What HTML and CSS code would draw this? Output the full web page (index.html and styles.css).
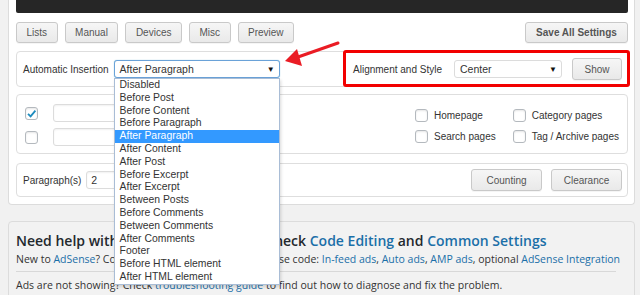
FILE: index.html
```html
<!DOCTYPE html>
<html lang="en">
<head>
    <meta charset="UTF-8">
    <meta name="viewport" content="width=device-width, initial-scale=1.0">
    <title>Ad Inserter Settings</title>
    <link rel="stylesheet" href="styles.css">
</head>
<body>
    <div class="page">
        <div class="panel settings">
            <div class="console"></div>

            <div class="toolbar">
                <div class="tabs">
                    <button class="btn">Lists</button>
                    <button class="btn">Manual</button>
                    <button class="btn">Devices</button>
                    <button class="btn">Misc</button>
                    <button class="btn">Preview</button>
                </div>
                <button class="btn btn-save">Save All Settings</button>
            </div>

            <div class="box box-insert">
                <label class="label">Automatic Insertion</label>
                <div class="select select-insert is-open">
                    <span>After Paragraph</span>
                    <span class="arrow">&#9660;</span>
                    <ul class="dropdown">
                        <li>Disabled</li>
                        <li>Before Post</li>
                        <li>Before Content</li>
                        <li>Before Paragraph</li>
                        <li class="selected">After Paragraph</li>
                        <li>After Content</li>
                        <li>After Post</li>
                        <li>Before Excerpt</li>
                        <li>After Excerpt</li>
                        <li>Between Posts</li>
                        <li>Before Comments</li>
                        <li>Between Comments</li>
                        <li>After Comments</li>
                        <li>Footer</li>
                        <li>Before HTML element</li>
                        <li>After HTML element</li>
                    </ul>
                </div>

                <div class="align-group">
                    <label class="label">Alignment and Style</label>
                    <div class="select select-align">
                        <span>Center</span>
                        <span class="arrow">&#9660;</span>
                    </div>
                    <button class="btn btn-show">Show</button>
                </div>
            </div>

            <div class="box box-pages">
                <div class="rows">
                    <div class="row">
                        <span class="check checked">
                            <svg viewBox="0 0 13 13" width="13" height="13"><path d="M3 6.8 L5.6 9.4 L10.4 3.6" fill="none" stroke="#1e8cbe" stroke-width="1.8"/></svg>
                        </span>
                        <input class="text-input" type="text">
                    </div>
                    <div class="row">
                        <span class="check"></span>
                        <input class="text-input" type="text">
                    </div>
                </div>
                <div class="page-types">
                    <label class="option"><span class="check"></span>Homepage</label>
                    <label class="option"><span class="check"></span>Category pages</label>
                    <label class="option"><span class="check"></span>Search pages</label>
                    <label class="option"><span class="check"></span>Tag / Archive pages</label>
                </div>
            </div>

            <div class="box box-para">
                <label class="label">Paragraph(s)</label>
                <input class="text-input para-input" type="text" value="2">
                <div class="para-actions">
                    <button class="btn btn-wide">Counting</button>
                    <button class="btn btn-wide">Clearance</button>
                </div>
            </div>
        </div>

        <div class="panel help">
            <h2>Need help with your settings? Please check <a href="#">Code Editing</a> and <a href="#">Common Settings</a></h2>
            <p>New to <a href="#">AdSense</a>? Connect the account and use AdSense code: <a href="#">In-feed ads</a>, <a href="#">Auto ads</a>, <a href="#">AMP ads</a>, optional <a href="#">AdSense Integration</a></p>
            <hr>
            <p>Ads are not showing? Check <a href="#">troubleshooting guide</a> to find out how to diagnose and fix the problem.</p>
        </div>

        <svg class="pointer" width="64" height="34" viewBox="0 0 64 34">
            <line x1="18" y1="21" x2="58" y2="7" stroke="#ea1c24" stroke-width="3" stroke-linecap="round"/>
            <polygon points="5,25 17,13 22,30" fill="#ea1c24"/>
        </svg>
    </div>
</body>
</html>
```

FILE: styles.css
```css
body {
    margin: 0;
    background-color: #f1f1f1;
    font-family: "Liberation Sans", Arial, sans-serif;
    font-size: 10px;
    color: #333;
}

.page {
    position: relative;
    padding: 0 5px 0 8px;
}

.panel {
    border: 1px solid #dcdcdc;
    border-radius: 4px;
}

/* top panel is cut off by the window */
.settings {
    background-color: #fff;
    border-top: none;
    border-radius: 0 0 4px 4px;
    padding: 0 6px 7px 7px;
}

.console {
    height: 13px;
    background-color: #262626;
    border-radius: 0 0 2px 2px;
}

.toolbar {
    display: flex;
    justify-content: space-between;
    margin-top: 9px;
}

.tabs {
    display: flex;
    gap: 7px;
}

.btn {
    height: 21px;
    padding: 0 9.5px;
    border: 1px solid #c9c9c9;
    border-radius: 3px;
    background: linear-gradient(#f6f6f6, #e9e9e9);
    font-family: inherit;
    font-size: 10px;
    color: #555;
    box-shadow: 0 1px 0 rgba(0,0,0,0.04);
}

.btn-save {
    width: 103px;
    font-weight: bold;
    color: #555;
}

.btn-show {
    width: 50px;
    height: 22px;
    padding: 0;
}

.btn-wide {
    width: 71px;
    height: 22px;
    padding: 0;
}

.box {
    border: 1px solid #dedede;
    border-radius: 4px;
    margin-top: 8px;
    display: flex;
    align-items: center;
}

.label {
    white-space: nowrap;
}

/* Automatic insertion row */
.box-insert {
    position: relative;
    height: 34px;
    padding: 0 5px 0 6px;
    gap: 5px;
}

.box-insert::after {
    content: "";
    position: absolute;
    left: 326px;
    right: -3px;
    top: -2px;
    bottom: -1px;
    border: 3px solid #f20000;
    border-radius: 3px;
    pointer-events: none;
}

.select {
    position: relative;
    height: 18px;
    box-sizing: border-box;
    border: 1px solid #dcdcdc;
    border-radius: 3px;
    background-color: #fff;
    display: flex;
    align-items: center;
    justify-content: space-between;
    padding: 0 4px 0 5px;
    font-size: 10.5px;
    color: #333;
}

.select .arrow {
    font-size: 8px;
    color: #111;
}

.select-insert {
    width: 166px;
}

.select.is-open {
    border-color: #6aa2d8;
    box-shadow: 0 0 1px rgba(30,140,190,0.6);
}

.select-align {
    width: 108px;
}

.align-group {
    margin-left: auto;
    display: flex;
    align-items: center;
}

.align-group .select {
    margin-left: 12px;
    margin-right: 10px;
}

.dropdown {
    position: absolute;
    top: calc(100% + 1px);
    left: -1px;
    width: 166px;
    box-sizing: border-box;
    margin: 0;
    padding: 0;
    list-style: none;
    background-color: #fff;
    border: 1px solid #a9bdd6;
    box-shadow: 1px 2px 3px rgba(0,0,0,0.15);
    z-index: 10;
}

.dropdown li {
    height: 12.8px;
    line-height: 12.8px;
    padding-left: 5px;
    font-size: 10.4px;
    color: #333;
    white-space: nowrap;
}

.dropdown li.selected {
    background-color: #3399ff;
    color: #fff;
}

/* Page types */
.box-pages {
    margin-top: 7px;
    padding: 9px 8px 7px 8px;
}

.rows {
    display: flex;
    flex-direction: column;
    gap: 6px;
}

.row {
    display: flex;
    align-items: center;
    gap: 15px;
}

.check {
    width: 13px;
    height: 13px;
    box-sizing: border-box;
    border: 1px solid #b4b9be;
    border-radius: 3px;
    background-color: #fff;
    box-shadow: inset 0 1px 2px rgba(0,0,0,0.1);
    display: inline-flex;
    flex-shrink: 0;
}

.check svg {
    margin: -1px;
}

.text-input {
    height: 18px;
    box-sizing: border-box;
    border: 1px solid #dcdcdc;
    border-radius: 3px;
    box-shadow: inset 0 1px 2px rgba(0,0,0,0.06);
    font-family: inherit;
    font-size: 10.5px;
    color: #333;
    padding: 0 4px;
}

.rows .text-input {
    width: 220px;
}

.page-types {
    margin-left: auto;
    margin-top: 2px;
    display: grid;
    grid-template-columns: auto auto;
    column-gap: 17px;
    row-gap: 8px;
}

.option {
    display: flex;
    align-items: center;
    gap: 6px;
    white-space: nowrap;
}

/* Paragraphs row */
.box-para {
    margin-top: 9px;
    height: 32px;
    padding: 0 5px 0 6px;
}

.para-input {
    margin-left: 5px;
    width: 120px;
}

.para-actions {
    margin-left: auto;
    display: flex;
    gap: 9px;
}

/* Help panel */
.help {
    margin-top: 16px;
    background-color: #f2f2f2;
    padding: 8px 10px 0 7px;
    font-family: "Open Sans", sans-serif;
    color: #333;
    height: 80px;
    overflow: hidden;
}

.help h2 {
    margin: 0;
    font-size: 14px;
    font-weight: 600;
    color: #23282d;
    line-height: 21px;
    white-space: nowrap;
}

.help p {
    margin: 0;
    font-size: 10.5px;
    line-height: 16px;
    white-space: nowrap;
}

.help a {
    color: #1b6fa8;
    text-decoration: none;
}

.help hr {
    border: none;
    border-top: 1px solid #d8d8d8;
    margin: 4px 0 5px;
    width: 600px;
}

.pointer {
    position: absolute;
    left: 280px;
    top: 36px;
}
```
